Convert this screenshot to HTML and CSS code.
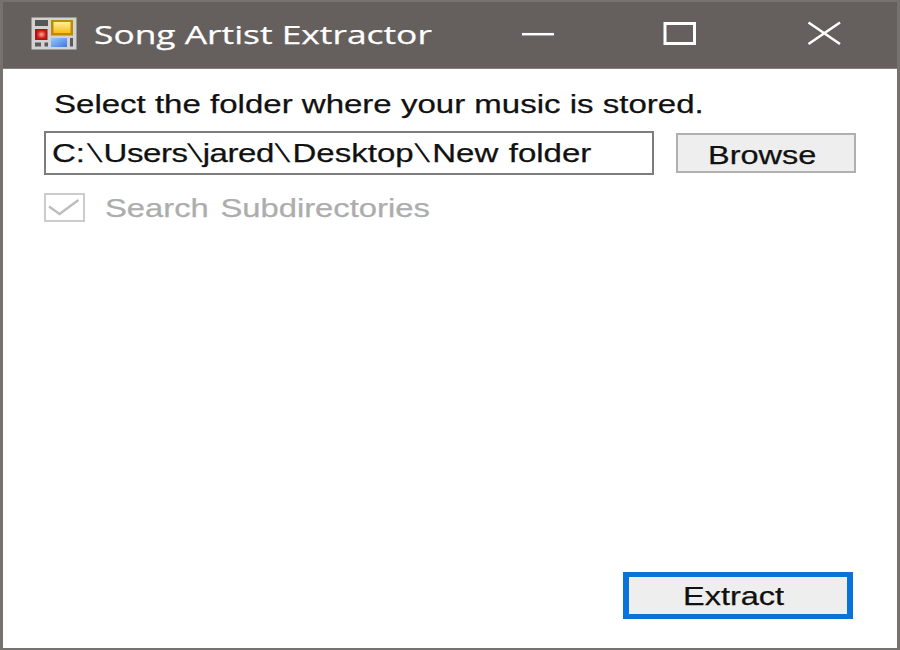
FILE: index.html
```html
<!DOCTYPE html>
<html lang="en">
<head>
<meta charset="utf-8">
<title>Song Artist Extractor</title>
<link rel="stylesheet" href="styles.css">
</head>
<body>
<div class="window">
  <header class="titlebar">
    <svg class="app-icon" width="46" height="33" viewBox="0 0 46 33">
      <defs>
        <linearGradient id="gold" x1="0" y1="0" x2="0" y2="1"><stop offset="0" stop-color="#fff09a"/><stop offset="1" stop-color="#f9bd16"/></linearGradient>
        <linearGradient id="blue" x1="0" y1="0" x2="1" y2="1"><stop offset="0" stop-color="#9cc8ff"/><stop offset="1" stop-color="#3b78e4"/></linearGradient>
        <radialGradient id="red"><stop offset="0" stop-color="#ffa49a"/><stop offset="1" stop-color="#cc1e16"/></radialGradient>
      </defs>
      <rect x="0.5" y="0.5" width="45" height="32" fill="#d2d2d2"/>
      <rect x="4" y="3" width="13" height="6" fill="#555"/>
      <rect x="4" y="12" width="12.500" height="11" fill="#ac1410"/>
      <rect x="6" y="13.500" width="9" height="8" fill="url(#red)"/>
      <rect x="20" y="3" width="22" height="15.500" fill="#bd8b08"/>
      <rect x="22.500" y="5" width="17" height="11" fill="url(#gold)"/>
      <rect x="20" y="21" width="16" height="9" fill="url(#blue)"/>
      <path d="M4 25.500h6v4H4zM13.500 25.500h3.500v4h-3.500zM39 21h3v8.500h-3z" fill="#5b5b5b"/>
    </svg>
    <h1 class="title"><span class="wide">Song Artist Extractor</span></h1>
    <div class="controls">
      <svg class="control" width="143" height="68" viewBox="0 0 143 68"><path d="M54 34.200h32" stroke="#fff" stroke-width="2.500"/></svg>
      <svg class="control" width="143" height="68" viewBox="0 0 143 68"><path d="M54 23.500h29.500v20H54z" fill="none" stroke="#fff" stroke-width="3"/></svg>
      <svg class="control" width="143" height="68" viewBox="0 0 143 68"><path d="M54.500 22.500l31.500 21.500M86 22.500L54.500 44" stroke="#fff" stroke-width="2.600"/></svg>
    </div>
  </header>
  <main class="form">
    <div class="prompt"><span class="wide">Select the folder where your music is stored.</span></div>
    <div class="folder-row">
      <div class="path"><span class="wide">C:<span class="sep">\</span><span class="narrow">Users</span><span class="sep tight">\</span><span class="narrow">jared</span><span class="sep">\</span>Desktop<span class="sep">\</span>New folder</span></div>
      <div class="button browse"><span class="wide">Browse</span></div>
    </div>
    <div class="option">
      <svg width="41" height="29" viewBox="0 0 41 29"><rect x="1" y="1" width="39" height="27" fill="#fff" stroke="#ccc" stroke-width="2"/><path d="M5 13.500l10.500 7.500L34.500 7" fill="none" stroke="#bdbdbd" stroke-width="2.400"/></svg>
      <div class="option-label"><span class="wide">Search Subdirectories</span></div>
    </div>
    <div class="actions"><div class="button extract"><span class="wide">Extract</span></div></div>
  </main>
</div>
</body>
</html>
```
FILE: styles.css
```css
* { box-sizing: border-box; }

body {
  margin: 0;
  font: 26px/30px "Liberation Sans", Arial, sans-serif;
  color: #111;
}

.window {
  display: flex;
  flex-direction: column;
  width: 900px;
  height: 650px;
  border: solid #767270;
  border-width: 2px 3px 2px 3px;
  background: #fff;
  overflow: hidden;
}

.titlebar {
  display: flex;
  flex: none;
  height: 67px;
  padding-left: 28px;
  background: #65605d;
  border-bottom: 1px solid #84807d;
}

.app-icon { flex: none; margin-top: 15px; }

.wide {
  display: inline-block;
  white-space: nowrap;
  transform-origin: 0 50%;
  -webkit-text-stroke: 0.25px currentColor;
}

.title {
  width: 380px;
  margin: 15px 0 0 17px;
  font: 26px/35px "Open Sans", "Noto Sans", sans-serif;
  color: #fff;
}

.title .wide { transform: scaleX(1.36); }

.controls { display: flex; margin-top: -2px; }
.control { flex: none; }

.form {
  display: flex;
  flex: 1;
  flex-direction: column;
  padding: 20px 41px 29px;
}

.prompt { height: 42px; padding-left: 10px; }
.prompt .wide { transform: scaleX(1.27); }

.folder-row {
  display: flex;
  align-items: center;
  gap: 22px;
  height: 44px;
}

.path {
  width: 611px;
  height: 44px;
  padding: 5px 0 0 6px;
  border: 2px solid #7d7d7d;
}

.path .wide {
  transform: scaleX(1.27);
  word-spacing: 1px;
}

.sep {
  display: inline-block;
  margin: 0 3.7px;
  transform: skewX(16deg);
  -webkit-text-stroke: 0;
}

.sep.tight { margin: 0 2.2px 0 2.5px; }

.narrow { letter-spacing: -0.35px; }

.button { background: #eee; }
.button .wide { transform: scaleX(1.25); }

.browse {
  width: 180px;
  height: 40px;
  padding: 5px 0 0 30px;
  border: 2px solid #b0b0b0;
}

.option {
  display: flex;
  gap: 20px;
  margin-top: 18px;
  color: #adadad;
}

.option-label .wide {
  transform: scaleX(1.26);
  word-spacing: 2px;
}

.actions {
  display: flex;
  justify-content: flex-end;
  margin-top: auto;
  padding-right: 3px;
}

.extract {
  width: 230px;
  height: 47px;
  padding: 4px 0 0 54px;
  border: solid #0873d8;
  border-width: 5px 6px;
}
```
